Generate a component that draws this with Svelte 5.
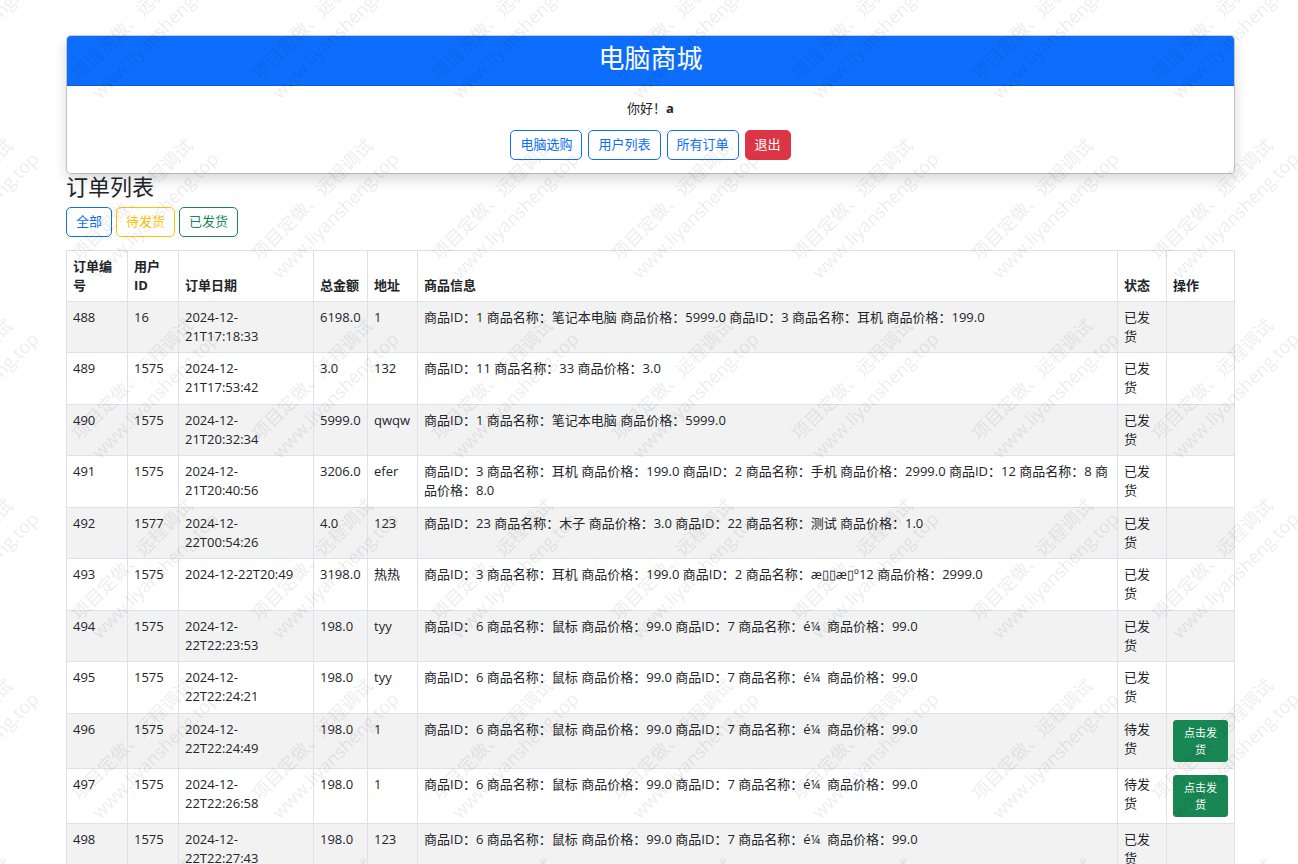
<script lang="ts">
	interface Order {
		id: number;
		userId: number;
		date: string;
		total: string;
		address: string;
		goods: string;
		shipped: boolean;
	}

	const navLinks = ['电脑选购', '用户列表', '所有订单'];
	const mouseGoods = '商品ID：6 商品名称：鼠标 商品价格：99.0 商品ID：7 商品名称：é¼\u00a0 商品价格：99.0';

	const orders: Order[] = $state([
		{ id: 488, userId: 16, date: '2024-12-21T17:18:33', total: '6198.0', address: '1', goods: '商品ID：1 商品名称：笔记本电脑 商品价格：5999.0 商品ID：3 商品名称：耳机 商品价格：199.0', shipped: true },
		{ id: 489, userId: 1575, date: '2024-12-21T17:53:42', total: '3.0', address: '132', goods: '商品ID：11 商品名称：33 商品价格：3.0', shipped: true },
		{ id: 490, userId: 1575, date: '2024-12-21T20:32:34', total: '5999.0', address: 'qwqw', goods: '商品ID：1 商品名称：笔记本电脑 商品价格：5999.0', shipped: true },
		{ id: 491, userId: 1575, date: '2024-12-21T20:40:56', total: '3206.0', address: 'efer', goods: '商品ID：3 商品名称：耳机 商品价格：199.0 商品ID：2 商品名称：手机 商品价格：2999.0 商品ID：12 商品名称：8 商品价格：8.0', shipped: true },
		{ id: 492, userId: 1577, date: '2024-12-22T00:54:26', total: '4.0', address: '123', goods: '商品ID：23 商品名称：木子 商品价格：3.0 商品ID：22 商品名称：测试 商品价格：1.0', shipped: true },
		{ id: 493, userId: 1575, date: '2024-12-22T20:49', total: '3198.0', address: '热热', goods: '商品ID：3 商品名称：耳机 商品价格：199.0 商品ID：2 商品名称：æ▯▯æ▯º12 商品价格：2999.0', shipped: true },
		{ id: 494, userId: 1575, date: '2024-12-22T22:23:53', total: '198.0', address: 'tyy', goods: mouseGoods, shipped: true },
		{ id: 495, userId: 1575, date: '2024-12-22T22:24:21', total: '198.0', address: 'tyy', goods: mouseGoods, shipped: true },
		{ id: 496, userId: 1575, date: '2024-12-22T22:24:49', total: '198.0', address: '1', goods: mouseGoods, shipped: false },
		{ id: 497, userId: 1575, date: '2024-12-22T22:26:58', total: '198.0', address: '1', goods: mouseGoods, shipped: false },
		{ id: 498, userId: 1575, date: '2024-12-22T22:27:43', total: '198.0', address: '123', goods: mouseGoods, shipped: true }
	]);

	let filter = $state('all');

	let visibleOrders = $derived(
		orders.filter((o) => filter === 'all' || o.shipped === (filter === 'shipped'))
	);
</script>

<div class="page">
	<header class="card">
		<h1>电脑商城</h1>
		<div class="card-body">
			<p>你好！<strong>a</strong></p>
			<nav>
				{#each navLinks as link}
					<a class="btn primary" href="#top">{link}</a>
				{/each}
				<a class="btn danger" href="#logout">退出</a>
			</nav>
		</div>
	</header>

	<main>
		<h2>订单列表</h2>
		<div class="filters">
			<button class="btn primary" onclick={() => (filter = 'all')}>全部</button>
			<button class="btn warning" onclick={() => (filter = 'pending')}>待发货</button>
			<button class="btn success" onclick={() => (filter = 'shipped')}>已发货</button>
		</div>

		<table>
			<colgroup>
				<col class="c-id" />
				<col class="c-user" />
				<col class="c-date" />
				<col class="c-total" />
				<col class="c-address" />
				<col />
				<col class="c-status" />
				<col class="c-action" />
			</colgroup>
			<thead>
				<tr>
					<th>订单编号</th>
					<th>用户ID</th>
					<th>订单日期</th>
					<th>总金额</th>
					<th>地址</th>
					<th>商品信息</th>
					<th>状态</th>
					<th>操作</th>
				</tr>
			</thead>
			<tbody>
				{#each visibleOrders as order (order.id)}
					<tr>
						<td>{order.id}</td>
						<td>{order.userId}</td>
						<td>{order.date}</td>
						<td>{order.total}</td>
						<td>{order.address}</td>
						<td>{order.goods}</td>
						<td>{order.shipped ? '已发货' : '待发货'}</td>
						<td class="action">
							{#if !order.shipped}
								<button class="ship" onclick={() => (order.shipped = true)}>点击发货</button>
							{/if}
						</td>
					</tr>
				{/each}
			</tbody>
		</table>
	</main>
</div>

<!-- repeating diagonal watermark over the whole window -->
<svg class="watermark" aria-hidden="true">
	<defs>
		<pattern id="mark" x="50" y="120" width="180" height="180" patternUnits="userSpaceOnUse">
			<text transform="translate(82 79) rotate(-45)">项目定做、远程调试</text>
			<text transform="translate(105 95) rotate(-45)">www.liyansheng.top</text>
		</pattern>
	</defs>
	<rect width="100%" height="100%" fill="url(#mark)" />
</svg>

<style>
	:global(body) {
		margin: 0;
		background: #fff;
		overflow: hidden auto;
		scrollbar-width: none;
	}

	.page {
		padding: 35px 63px 0 66px;
		font-family: 'Open Sans', 'Noto Sans', 'Noto Sans CJK SC', sans-serif;
		font-size: 13px;
		line-height: 19px;
		color: #212529;
	}

	.card {
		border: 1px solid rgba(0, 0, 0, 0.175);
		border-radius: 5px;
		background: #fff;
		background-clip: padding-box;
		box-shadow: 0 6px 13px rgba(0, 0, 0, 0.15);
		text-align: center;
	}

	h1 {
		margin: 0;
		padding: 7px 12px 11px;
		border-bottom: 1px solid rgba(0, 0, 0, 0.175);
		border-radius: 4px 4px 0 0;
		background: #0d6efd;
		color: #fff;
		font-size: 26px;
		font-weight: 400;
		line-height: 31px;
	}

	.card-body {
		padding: 13px;
	}

	p {
		margin: 0 0 12px;
	}

	nav {
		display: flex;
		justify-content: center;
		gap: 6px;
	}

	h2 {
		margin: 0 0 8px;
		font-size: 22px;
		font-weight: 400;
		line-height: 25px;
	}

	.filters {
		display: flex;
		gap: 4px;
		margin-bottom: 13px;
	}

	.btn {
		padding: 4px 9px 5px;
		border: 1px solid currentColor;
		border-radius: 5px;
		background: none;
		font: inherit;
		text-decoration: none;
		cursor: pointer;
	}

	.primary {
		color: #0d6efd;
	}

	.warning {
		color: #ffc107;
	}

	.success {
		color: #198754;
	}

	.danger {
		border-color: #dc3545;
		background: #dc3545;
		color: #fff;
	}

	table {
		width: 100%;
		table-layout: fixed;
		border-collapse: collapse;
	}

	.c-id {
		width: 61px;
	}

	.c-user {
		width: 51px;
	}

	.c-date {
		width: 135px;
	}

	.c-total {
		width: 54px;
	}

	.c-address {
		width: 50px;
	}

	.c-status {
		width: 49px;
	}

	.c-action {
		width: 68px;
	}

	th,
	td {
		padding: 6px;
		border: 1px solid #dee2e6;
		text-align: left;
		vertical-align: top;
	}

	th {
		vertical-align: bottom;
		font-weight: 700;
	}

	tbody tr:nth-child(odd) {
		background: #f2f2f2;
	}

	tbody tr:nth-child(even) td:not(.action) {
		padding-bottom: 7px;
	}

	.ship {
		display: block;
		width: 100%;
		padding: 3px 6px;
		border: 1px solid #198754;
		border-radius: 3px;
		background: #198754;
		color: #fff;
		font: inherit;
		font-size: 11px;
		line-height: 17px;
		cursor: pointer;
	}

	.watermark {
		position: fixed;
		inset: 0;
		width: 100%;
		height: 100%;
		pointer-events: none;
	}

	.watermark text {
		font-family: 'Open Sans', 'Noto Sans CJK SC', sans-serif;
		font-size: 18px;
		text-anchor: middle;
		dominant-baseline: central;
		fill: rgba(0, 0, 0, 0.07);
	}
</style>
